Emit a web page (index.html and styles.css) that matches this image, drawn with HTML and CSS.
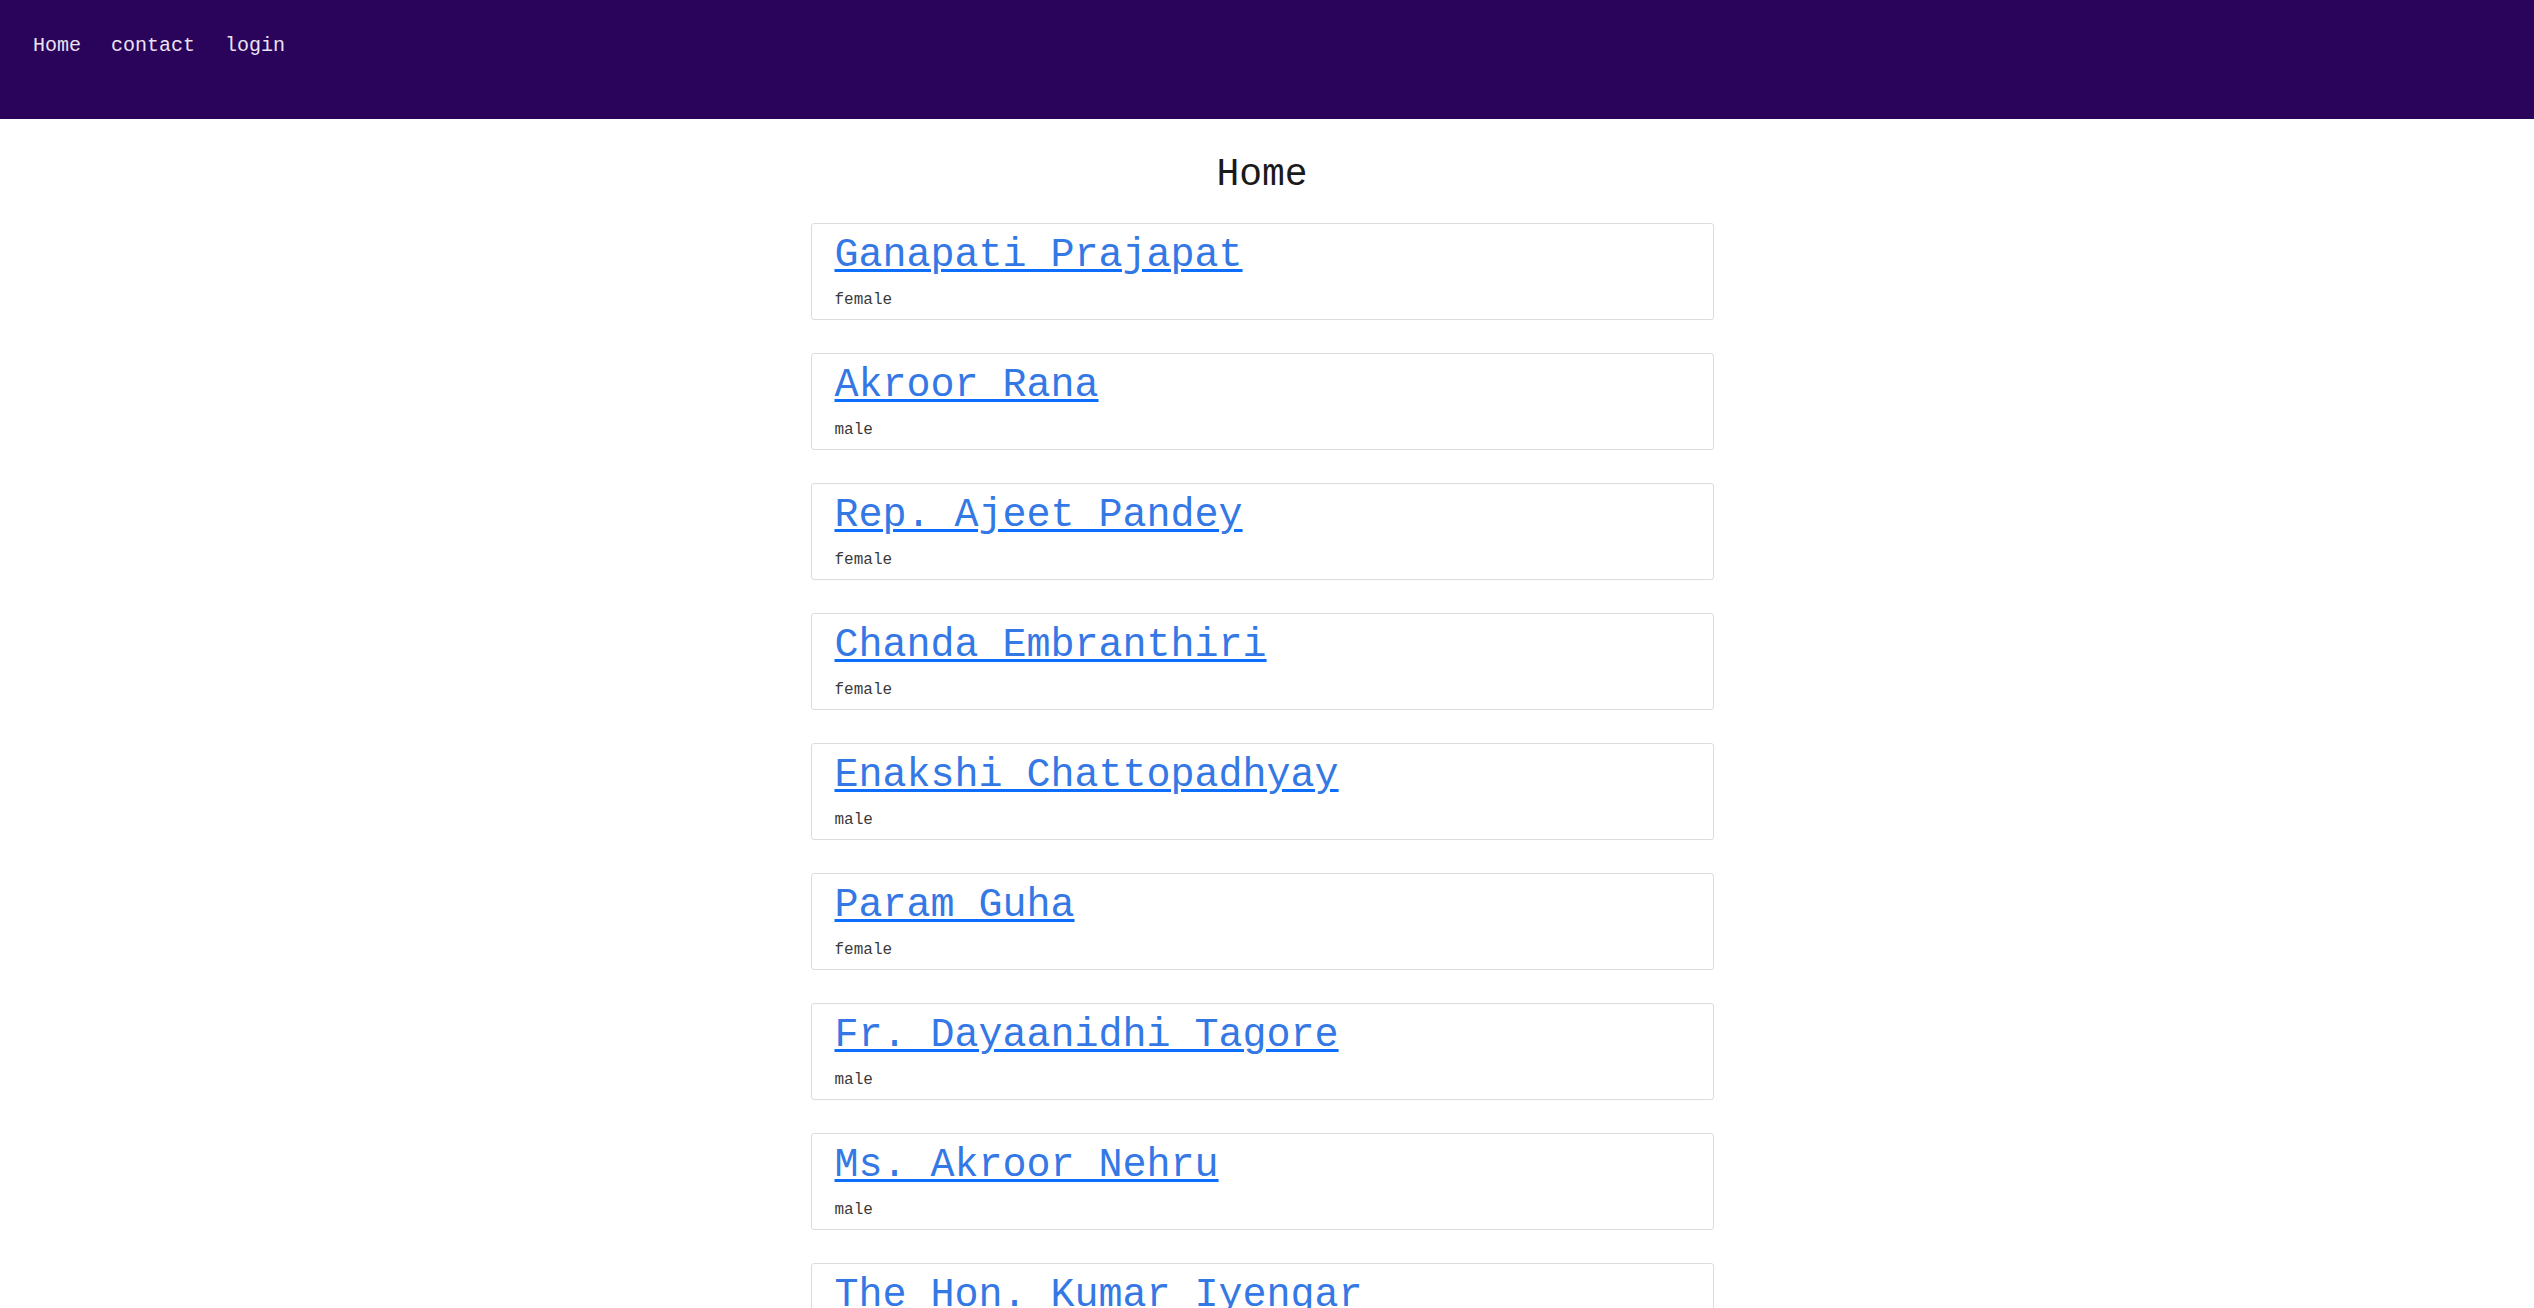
FILE: index.html
```html
<!DOCTYPE html>
<html lang="en">
<head>
<meta charset="utf-8">
<title>Home</title>
<link rel="stylesheet" href="styles.css">
</head>
<body>
<header class="topbar">
  <nav class="nav">
    <a class="nav-link" href="#">Home</a>
    <a class="nav-link" href="#">contact</a>
    <a class="nav-link" href="#">login</a>
  </nav>
</header>
<main class="main">
  <h1 class="title">Home</h1>
  <div class="list">
    <div class="card"><a class="name" href="#">Ganapati Prajapat</a><p class="gender">female</p></div>
    <div class="card"><a class="name" href="#">Akroor Rana</a><p class="gender">male</p></div>
    <div class="card"><a class="name" href="#">Rep. Ajeet Pandey</a><p class="gender">female</p></div>
    <div class="card"><a class="name" href="#">Chanda Embranthiri</a><p class="gender">female</p></div>
    <div class="card"><a class="name" href="#">Enakshi Chattopadhyay</a><p class="gender">male</p></div>
    <div class="card"><a class="name" href="#">Param Guha</a><p class="gender">female</p></div>
    <div class="card"><a class="name" href="#">Fr. Dayaanidhi Tagore</a><p class="gender">male</p></div>
    <div class="card"><a class="name" href="#">Ms. Akroor Nehru</a><p class="gender">male</p></div>
    <div class="card"><a class="name" href="#">The Hon. Kumar Iyengar</a><p class="gender">female</p></div>
  </div>
</main>
</body>
</html>
```
FILE: styles.css
```css
html, body {
  margin: 0;
  padding: 0;
  background: #ffffff;
  font-family: "Liberation Mono", "Courier New", monospace;
}

.topbar {
  height: 119px;
  background: #29045a;
  box-sizing: border-box;
  padding: 34px 0 0 33px;
}

.nav {
  display: flex;
  gap: 30px;
}

.nav-link {
  font-size: 20px;
  line-height: 23px;
  color: #e9e2f3;
  text-decoration: none;
}

.main {
  padding-right: 10px;
  display: flex;
  flex-direction: column;
  align-items: center;
}

.title {
  margin: 34px 0 27px;
  font-size: 38px;
  line-height: 43px;
  font-weight: normal;
  color: #1a1a1a;
}

.list {
  width: 903px;
  display: flex;
  flex-direction: column;
  gap: 33px;
}

.card {
  border: 1px solid #dcdcdc;
  border-radius: 3px;
  padding: 9px 23px 0;
  box-sizing: border-box;
  height: 97px;
  background: #fff;
}

.name {
  display: block;
  font-size: 40px;
  line-height: 45px;
  color: #3478e6;
  text-decoration: underline;
  text-decoration-color: #0d6efd;
  text-decoration-thickness: 3px;
  text-underline-offset: 3px;
}

.gender {
  margin: 13px 0 0;
  font-size: 16px;
  line-height: 18px;
  color: #3a3a3a;
}
```
